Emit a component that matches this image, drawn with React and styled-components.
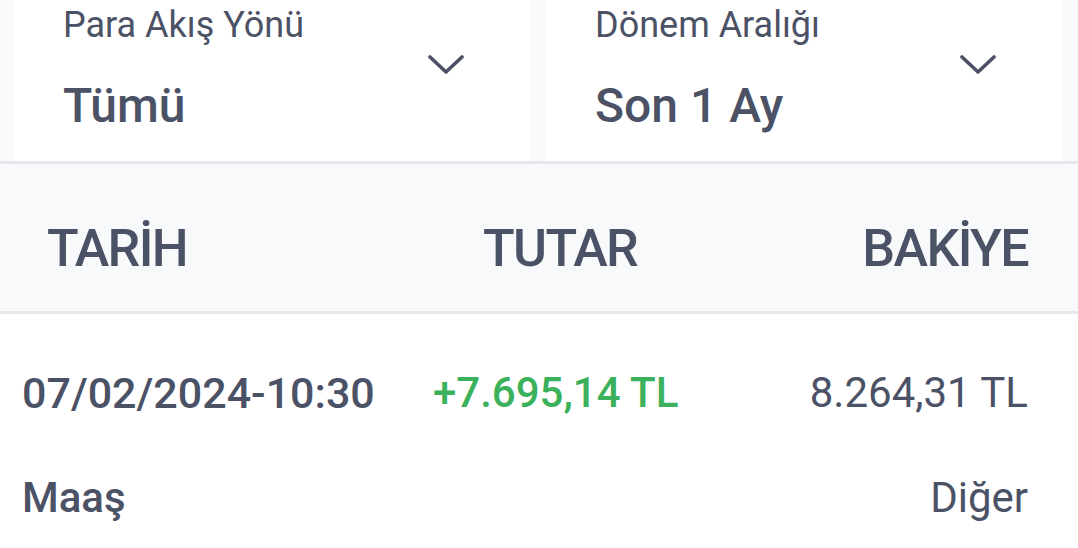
import React from 'react';
import styled, { createGlobalStyle } from 'styled-components';

const GlobalStyle = createGlobalStyle`
  html, body {
    margin: 0;
    padding: 0;
    background: #f8f9fb;
    font-family: Roboto, "Noto Sans", "Liberation Sans", sans-serif;
    color: #4b5266;
  }
`;

const Page = styled.div`
  width: 1078px;
  height: 548px;
  overflow: hidden;
  background: #f8f9fb;
`;

const FilterBar = styled.div`
  display: grid;
  grid-template-columns: 516px 516px;
  column-gap: 16px;
  padding: 0 16px 0 14px;
  border-bottom: 3px solid #e6e7ea;
`;

const FilterCard = styled.div`
  height: 161px;
  background: #ffffff;
  display: flex;
  align-items: flex-start;
  justify-content: space-between;
  padding-left: ${p => p.$inset}px;
  padding-right: 66px;
  box-sizing: border-box;
`;

const FilterText = styled.div`
  display: flex;
  flex-direction: column;
  padding-top: 5px;
`;

const Label = styled.span`
  font-size: 36px;
  line-height: 40px;
  font-weight: 400;
`;

const Value = styled.span`
  margin-top: 33px;
  font-size: 48px;
  line-height: 56px;
  font-weight: 500;
`;

const Chevron = styled.svg`
  margin-top: 55px;
  width: 36px;
  height: 20px;
`;

const HeaderBand = styled.div`
  display: grid;
  grid-template-columns: 436px auto 1fr;
  padding: 55px 50px 32px 47px;
  border-bottom: 3px solid #e6e7ea;
`;

const HeaderCell = styled.span`
  font-size: 52px;
  line-height: 60px;
  font-weight: 500;
  letter-spacing: -1.6px;
  text-align: ${p => p.$align || 'left'};
`;

const Rows = styled.div`
  background: #ffffff;
  padding: 54px 50px 40px 22px;
`;

const Row = styled.div`
  display: grid;
  grid-template-columns: 411px auto 1fr;
  margin-top: ${p => p.$gap || 0}px;
`;

const Cell = styled.span`
  font-size: ${p => p.$size || 42}px;
  line-height: 50px;
  font-weight: ${p => p.$weight || 500};
  color: ${p => p.$color || '#4b5266'};
  text-align: ${p => p.$align || 'left'};
`;

function Dropdown({ label, value, inset }) {
  return (
    <FilterCard $inset={inset}>
      <FilterText>
        <Label>{label}</Label>
        <Value>{value}</Value>
      </FilterText>
      <Chevron viewBox="0 0 36 20" fill="none">
        <polyline points="2,2 18,17 34,2" stroke="#4b5266" strokeWidth="3.6" strokeLinecap="round" strokeLinejoin="round" />
      </Chevron>
    </FilterCard>
  );
}

export default function App() {
  return (
    <Page>
      <GlobalStyle />
      <FilterBar>
        <Dropdown label="Para Akış Yönü" value="Tümü" inset={49} />
        <Dropdown label="Dönem Aralığı" value="Son 1 Ay" inset={49} />
      </FilterBar>
      <HeaderBand>
        <HeaderCell>TARİH</HeaderCell>
        <HeaderCell>TUTAR</HeaderCell>
        <HeaderCell $align="right">BAKİYE</HeaderCell>
      </HeaderBand>
      <Rows>
        <Row>
          <Cell $size={43}>07/02/2024-10:30</Cell>
          <Cell $color="#3bb15b">+7.695,14 TL</Cell>
          <Cell $align="right" $weight={400}>8.264,31 TL</Cell>
        </Row>
        <Row $gap={55}>
          <Cell>Maaş</Cell>
          <Cell />
          <Cell $align="right" $weight={400}>Diğer</Cell>
        </Row>
      </Rows>
    </Page>
  );
}
